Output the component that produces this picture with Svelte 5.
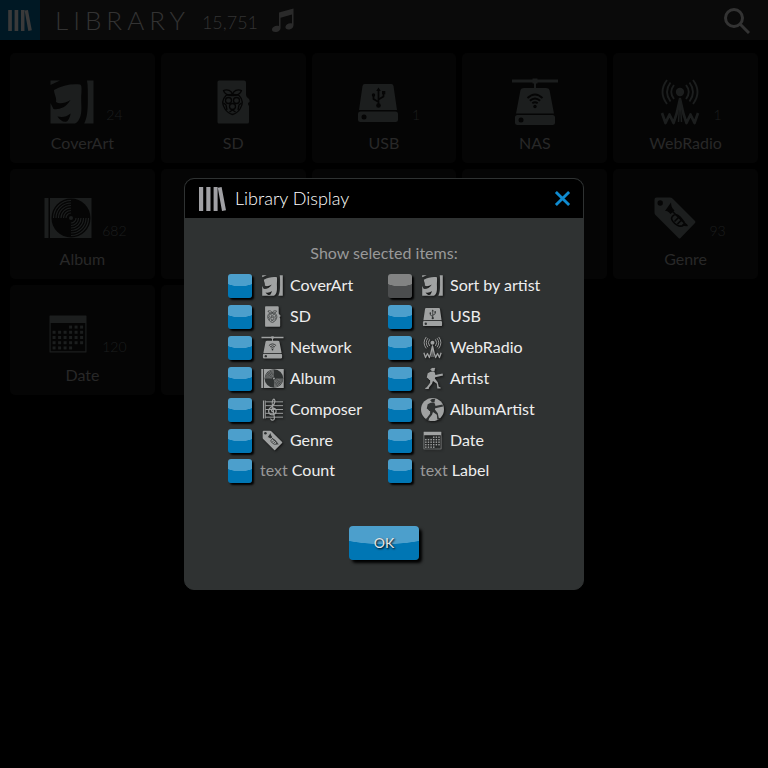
<script>
  const tiles = [
    { icon: 'coverart', label: 'CoverArt', count: '24' },
    { icon: 'sd', label: 'SD' },
    { icon: 'usb', label: 'USB', count: '1' },
    { icon: 'nas', label: 'NAS' },
    { icon: 'webradio', label: 'WebRadio', count: '1' },
    { icon: 'album', label: 'Album', count: '682' },
    {},
    {},
    {},
    { icon: 'genre', label: 'Genre', count: '93' },
    { icon: 'date', label: 'Date', count: '120' },
    {}
  ];

  let options = $state([
    { icon: 'coverart', label: 'CoverArt', on: true },
    { icon: 'coverart', label: 'Sort by artist', on: false },
    { icon: 'sd', label: 'SD', on: true },
    { icon: 'usb', label: 'USB', on: true },
    { icon: 'nas', label: 'Network', on: true },
    { icon: 'webradio', label: 'WebRadio', on: true },
    { icon: 'album', label: 'Album', on: true },
    { icon: 'artist', label: 'Artist', on: true },
    { icon: 'composer', label: 'Composer', on: true },
    { icon: 'albumartist', label: 'AlbumArtist', on: true },
    { icon: 'genre', label: 'Genre', on: true },
    { icon: 'date', label: 'Date', on: true },
    { label: 'Count', on: true },
    { label: 'Label', on: true }
  ]);

  const dots = [];
  for (let r = 0; r < 5; r++) {
    for (let c = 0; c < 6; c++) {
      if ((r === 0 && c < 3) || (r === 4 && c > 3)) continue;
      dots.push([8.6 + c * 5.5, 15.6 + r * 5.2]);
    }
  }
</script>

{#snippet books()}
  <svg class="books" viewBox="0 0 27 24" aria-hidden="true">
    <path d="M0 0h4.200v24H0zM7.300 0h4.200v24H7.300zM14.600 0h4v24h-4zM18.800.7 22.600 0 27 23.200l-4 .8z" />
  </svg>
{/snippet}

{#snippet player()}
  <circle cx="25" cy="5.500" r="4" />
  <path d="m19.500 4 9-2.500 1.500 2-10 2.500z" />
  <path d="M20 10 28 10 30 15 29 24 35 32 37 41 41 43 41 45 34 45 33 35 25 29 23 35 17 42 16 46 9 46 9 44 12 42 19 33 19 27 12 22 14 13z" />
  <path d="M14 20 20 15 27 17 45 13.500 46 17.500 30 21.500 25 26 17 27z" />
{/snippet}

{#snippet glyph(name)}
  <svg class="glyph" viewBox="0 0 48 48" aria-hidden="true">
    {#if name === 'coverart'}
      <path d="M2.5 2.5H12L2.5 7zM39 2.5h6.5v43h-9.3c3-6 3.6-13 3.6-23 0-8 .2-15-.8-20z" />
      <path fill-rule="evenodd" d="M6 12C14 7.500 23 5.500 32 6.500 33.500 7 33.700 9 33.500 14c-1 9 1 18-1 24-1.500 4-3 6.500-5.500 7.500H2.500V25l3 6C10 32 18 30 22.500 22 16 26 11 26 8 24 9 20 6 16 6 12zM9.500 38.500c3 5 9 7.500 11 3 1-2 2-4 2-6-4 3.500-8 4-13 3z" />
    {:else if name === 'sd'}
      <path d="M10 2.500h25q2 0 2 2V17q0 2 3 4 1 2 .5 3l-1.500 1q0 2 1 3V44q0 1.500-1.500 1.500H10q-1.500 0-1.500-1.500V4q0-1.500 1.500-1.500z" />
      <g class="line" stroke-width="1.300">
        <path d="M23.500 17.500c-4.500 0-8-1.500-9-5 4-1.500 8 0 9 4 1-4 5-5.500 9-4-1 3.500-4.500 5-9 5z" />
        <path d="M17 17.500c-4 4-4 9-1 13.500 2 3 5 5 7.500 5.500 2.500-.5 5.500-2.500 7.500-5.500 3-4.500 3-9.500-1-13.500-4-1.500-9-1.500-13 0z" />
        <circle cx="19.500" cy="22.500" r="3" /><circle cx="27.500" cy="22.500" r="3" />
        <circle cx="23.500" cy="28.500" r="3" />
        <path d="m14.500 25 2.500 2 1 5M32.500 25 30 27l-1 5M20.500 34l3-2 3 2" />
      </g>
    {:else if name === 'usb'}
      <path d="M10.500 6h27q1.500 0 2 2L43 32H5L8.500 8q.5-2 2-2zM6.500 33.500h35q2.500 0 2.500 2.500v5.500q0 2.500-2.500 2.500h-35Q4 44 4 41.500V36q0-2.500 2.500-2.500z" />
      <circle class="cut" cx="10" cy="39" r="2.500" />
      <g class="line" stroke-width="1.700"><path d="M24.500 28V12M24.500 24l-5-3v-4M24.500 21.500l5-3v-3" /></g>
      <g class="cut"><circle cx="24.500" cy="27.500" r="2.300" /><circle cx="19.500" cy="17" r="1.700" /><path d="M28 13h3.300v3.300H28zM22.200 13h4.600L24.500 9.500z" /></g>
    {:else if name === 'nas'}
      <path d="M1 1.500h20.500V.5h5v1H47v3H26.500v1H25V10h10q3 0 3.500 2L43 35.500H5L9.500 12Q10 10 13 10h10V5.500h-1.500v-1H1zM6.500 37h35q2.500 0 2.500 2.500V45q0 2-2.500 2h-35Q4 47 4 45v-5.500Q4 37 6.500 37z" />
      <circle class="cut" cx="10" cy="42" r="2.500" />
      <circle class="cut" cx="24" cy="28.500" r="1.700" />
      <g class="line" stroke-width="1.900"><path d="M16.500 20q7.500-7 15 0M18.900 22.700q5.100-4.600 10.200 0M21.300 25.300q2.700-2 5.400 0" /></g>
    {:else if name === 'webradio'}
      <circle cx="24" cy="14" r="4.200" />
      <g class="wave">
        <path d="M18 7q-5.500 7 0 14M14.500 4.500q-7 9.500 0 19M11 2q-9 12 0 24M30 7q5.500 7 0 14M33.500 4.500q7 9.500 0 19M37 2q9 12 0 24" stroke-width="1.900" />
        <path d="M6 35l3.500 10 4-8.500 4 8.500 3-9L24 21l3.500 15 3 9 4-8.500 4 8.500 3.500-10" stroke-width="2.700" />
        <path d="M24 20l-1.500 24M24 20l1.500 24" stroke-width="1.500" />
      </g>
    {:else if name === 'album'}
      <path d="M.5 4h4v40h-4zM6 4h41.500v40H6z" />
      <circle class="cut" cx="27" cy="24" r="19.500" />
      <circle cx="27" cy="24" r="2" />
      <g class="wave" stroke-width="1.200">
        {#each [5, 7.5, 10, 12.5, 15, 17.5] as r}
          <path d={`M${27 - r} 24A${r} ${r} 0 0 1 27 ${24 - r}M${27 + r} 24A${r} ${r} 0 0 1 27 ${24 + r}`} />
        {/each}
      </g>
    {:else if name === 'genre'}
      <path d="M5.500 3.500H19q1.500 0 2.500 1L44 27q1 1 0 2L29.500 44q-1 1-2 0L4.500 21q-1-1-1-2.500v-13q0-2 2-2z" />
      <circle class="cut" cx="9.200" cy="9" r="2.700" />
      <path class="cut" d="M20 8.500c0 3 1 6 3.500 8l-4 3.500C17.500 17.500 16 17 14 17z" />
      <g class="line" stroke-width="1.600"><path d="m20 16 16 15.500-5-.5M21 23q3-5 8 0l4 5q1 5-5 4-5-2-7-6-1-2 0-3zM23.500 27.500l4-4M26.500 30l4-4" /></g>
    {:else if name === 'date'}
      <path fill-rule="evenodd" d="M6 5.500h36q.5 0 .5.500v36q0 .5-.5.500H6q-.5 0-.5-.5V6q0-.5.500-.5zM6.700 13v28.300h34.600V13z" />
      {#each dots as [x, y]}
        <rect {x} {y} width="3" height="3" />
      {/each}
    {:else if name === 'artist'}
      {@render player()}
    {:else if name === 'albumartist'}
      <circle cx="24" cy="24" r="24" />
      <g class="cut">{@render player()}</g>
    {:else if name === 'composer'}
      <path d="M4 5h3v38H4zM8.500 5H10v38H8.500z" />
      <g class="wave">
        <path d="M9 8h37M9 16h37M9 24h37M9 32h37M9 40h37" stroke-width="2" />
        <path d="M26 29q-5-1-4-5 3-5 8-1 4 6-2 11-7 3-11-2-3-7 3-12 9-7 9-14-1-6-4-2-3 5-1 12l4 25q0 6-5 5-3-1-2-3" stroke-width="2.600" />
      </g>
    {/if}
  </svg>
{/snippet}

<div class="screen">
  <header class="bar">
    <button class="home" aria-label="Library">{@render books()}</button>
    <h1>LIBRARY</h1>
    <span class="total">15,751</span>
    <svg class="note" viewBox="0 0 24 24" aria-hidden="true">
      <path d="M8 4.500 22.500.5V17c0 3-2.500 4.500-5 4.500-2 0-3.500-1-3-3 .5-2.500 4-4 6.500-3V6.500L9.500 9.700V20c0 2.500-2.500 4-5 4S.7 22.800 1 21c.5-2.500 4-4 7-3z" />
    </svg>
    <button class="search" aria-label="Search">
      <svg viewBox="0 0 26 26" aria-hidden="true">
        <circle cx="10" cy="10" r="8.500" />
        <path d="m16 16 9 9" />
      </svg>
    </button>
  </header>

  <main class="tiles">
    {#each tiles as tile}
      {#if tile.label}
        <button class="tile">
          <span class="art">
            <span class="holder">{@render glyph(tile.icon)}</span>
            {#if tile.count}<span class="count">{tile.count}</span>{/if}
          </span>
          <span class="name">{tile.label}</span>
        </button>
      {:else}
        <div class="tile"></div>
      {/if}
    {/each}
  </main>

  <div class="overlay">
    <div class="dialog" role="dialog" aria-labelledby="dialog-title">
      <div class="title">
        {@render books()}
        <h2 id="dialog-title">Library Display</h2>
        <button class="close" aria-label="Close">
          <svg viewBox="0 0 18 18" aria-hidden="true"><path d="m2 2 14 14M16 2 2 16" /></svg>
        </button>
      </div>
      <p>Show selected items:</p>
      <div class="options">
        {#each options as option}
          <label class:plain={!option.icon}>
            <input type="checkbox" bind:checked={option.on} />
            {#if option.icon}
              <span class="mini">{@render glyph(option.icon)}</span>
              <span class="text">{option.label}</span>
            {:else}
              <span class="text"><span class="kind">text</span> {option.label}</span>
            {/if}
          </label>
        {/each}
      </div>
      <button class="ok">OK</button>
    </div>
  </div>
</div>

<style>
  :global(body) {
    margin: 0;
    background: #000;
  }
  .screen {
    position: relative;
    min-height: 100vh;
    font-family: Lato, 'Liberation Sans', sans-serif;
    background: #000;
  }
  button {
    margin: 0;
    padding: 0;
    border: 0;
    font: inherit;
    color: inherit;
    background: none;
  }
  svg {
    display: block;
    fill: currentColor;
  }
  .bar {
    display: flex;
    align-items: center;
    height: 40px;
    color: #333;
    background: #0a0a0a;
  }
  .home {
    display: grid;
    place-items: center;
    width: 40px;
    height: 40px;
    color: #3a3a3a;
    background: #001824;
  }
  .home .books {
    width: 24px;
    height: 21px;
  }
  h1 {
    margin: 0 12px 0 15px;
    font-size: 26px;
    font-weight: 300;
    line-height: 32px;
    letter-spacing: 5px;
  }
  .total {
    margin-top: 4px;
    font-size: 18px;
    font-weight: 300;
  }
  .note {
    width: 24px;
    height: 24px;
    margin-left: 13px;
    color: #2a2a2a;
  }
  .search {
    margin: 2px 18px 0 auto;
    color: #333;
  }
  .search svg {
    width: 26px;
    height: 26px;
    fill: none;
    stroke: currentColor;
    stroke-width: 3px;
  }
  .tiles {
    display: grid;
    grid-template-columns: repeat(5, 1fr);
    gap: 6px;
    padding: 13px 10px;
  }
  .tile {
    --cut: #050505;
    display: flex;
    flex-direction: column;
    align-items: center;
    box-sizing: border-box;
    height: 110px;
    padding-top: 25px;
    border-radius: 5px;
    background: #050505;
  }
  .art {
    display: flex;
    align-items: flex-end;
    height: 48px;
    color: #1c1e1e;
  }
  .holder {
    display: grid;
    place-items: center;
    width: 60px;
    height: 48px;
  }
  .holder .glyph {
    width: 48px;
    height: 48px;
  }
  .count {
    margin: 0 0 2px 4px;
    font-size: 14px;
    font-weight: 300;
    line-height: 18px;
  }
  .name {
    margin-top: 7px;
    font-size: 16px;
    line-height: 20px;
    color: #282828;
  }
  .cut {
    fill: var(--cut);
  }
  .line {
    fill: none;
    stroke: var(--cut);
    stroke-linejoin: round;
  }
  .wave {
    fill: none;
    stroke: currentColor;
    stroke-linejoin: round;
  }
  .overlay {
    position: absolute;
    inset: 0;
    display: grid;
    place-items: center;
  }
  .dialog {
    --cut: #2f3232;
    box-sizing: border-box;
    width: 400px;
    padding-bottom: 29px;
    border: 1px solid #2f3232;
    border-radius: 10px;
    overflow: hidden;
    text-align: center;
    color: #eee;
    background: #2f3232;
  }
  .title {
    display: flex;
    align-items: center;
    height: 39px;
    padding: 0 12px 0 14px;
    background: #000;
  }
  .title .books {
    width: 27px;
    height: 24px;
    color: #a0a0a4;
  }
  h2 {
    flex: 1;
    margin: 0 0 2px 9px;
    font-size: 18px;
    font-weight: 300;
    line-height: 24px;
    text-align: left;
    color: #fff;
  }
  .close svg {
    width: 17px;
    height: 17px;
    stroke: #0f8bd0;
    stroke-width: 3px;
  }
  p {
    margin: 24px 0 6px;
    font-size: 16px;
    line-height: 22px;
    color: #999;
  }
  .options {
    display: grid;
    grid-template-columns: 160px 160px;
    padding-left: 43px;
    font-size: 16px;
    line-height: 20px;
  }
  label {
    display: flex;
    align-items: center;
    height: 31px;
  }
  .plain {
    height: 29px;
  }
  .text {
    padding-bottom: 2px;
  }
  input {
    appearance: none;
    width: 24px;
    height: 24px;
    margin: 0 8px 0 0;
    border-radius: 3px;
    box-shadow: 2px 2px 2px #000;
    background: radial-gradient(ellipse 90% 52% at 50% 0, #828383 96%, #4b4d4e 100%);
  }
  input:checked {
    background: radial-gradient(ellipse 90% 52% at 50% 0, #4c9fcc 96%, #0076b4 100%);
  }
  .mini {
    display: grid;
    place-items: center;
    width: 24px;
    margin-right: 6px;
    color: #a0a2a2;
  }
  .mini .glyph {
    width: 23px;
    height: 23px;
    filter: drop-shadow(1px 1px 1px #111);
  }
  .kind {
    color: #999;
  }
  .ok {
    width: 70px;
    height: 34px;
    margin-top: 41px;
    border-radius: 4px;
    font-size: 14px;
    line-height: 34px;
    color: #e6e6e6;
    text-shadow: 1px 1px 2px #000;
    background: radial-gradient(ellipse 90% 54% at 50% 0, #4c9fcc 97%, #0076b4 100%);
    box-shadow: 3px 3px 3px #000;
  }
</style>
